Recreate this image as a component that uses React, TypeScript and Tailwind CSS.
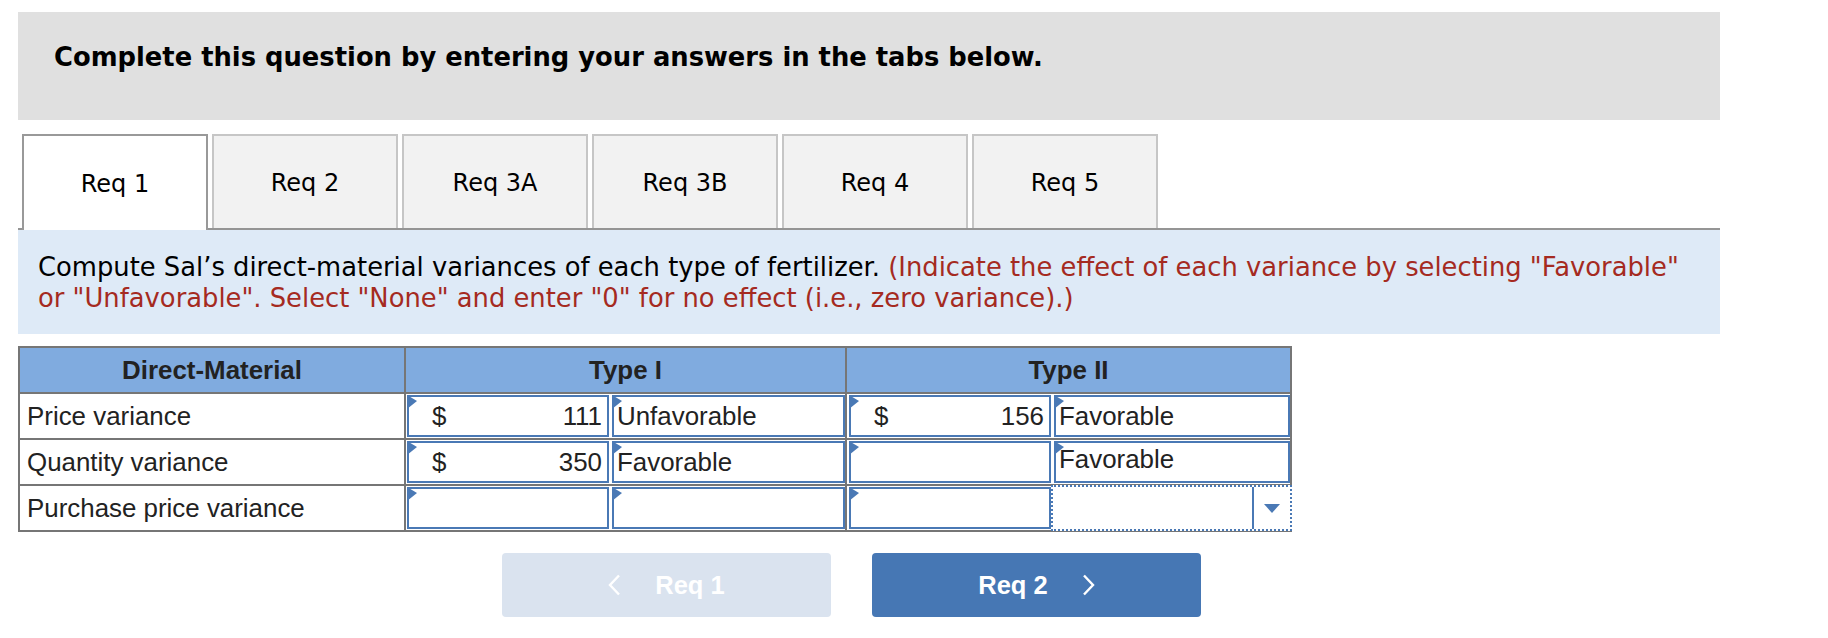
import React from "react";

const VERDANA = "font-['DejaVu_Sans',Verdana,sans-serif]";
const ARIAL = "font-['Liberation_Sans',Arial,sans-serif]";

function Flag() {
  return (
    <svg
      className="absolute left-[-2px] top-[-2px]"
      width="10"
      height="14"
      viewBox="0 0 10 14"
    >
      <polygon points="0,0 10,6 0,14" fill="#4a79b5" />
    </svg>
  );
}

function Amount({ value, dollar }: { value?: string; dollar?: boolean }) {
  return (
    <div className="relative w-[202px] h-[42px] border-2 border-[#4a79b5] bg-white flex items-center pl-[23px] pr-[5px]">
      <Flag />
      <span className="flex-1">{dollar ? "$" : ""}</span>
      <span>{value ?? ""}</span>
    </div>
  );
}

function Select({ value, grow, raised }: { value?: string; grow?: boolean; raised?: boolean }) {
  return (
    <div
      className={
        "relative h-[42px] border-2 border-[#4a79b5] bg-white flex items-center pl-[3px] " +
        (grow ? "flex-1" : "w-[233px]") +
        (raised ? " pb-[5px]" : "")
      }
    >
      <Flag />
      <span>{value ?? ""}</span>
    </div>
  );
}

function Tab({ label, active }: { label: string; active?: boolean }) {
  if (active) {
    return (
      <div className="relative z-10 w-[186px] h-[96px] border-2 border-b-0 border-[#999999] bg-white flex items-center justify-center pt-[2px]">
        {label}
      </div>
    );
  }
  return (
    <div className="w-[186px] h-[94px] border-2 border-b-0 border-[#c6c6c6] bg-[#f2f2f2] flex items-center justify-center pt-[2px]">
      {label}
    </div>
  );
}

function Chevron({ dir }: { dir: "left" | "right" }) {
  return (
    <svg width="13" height="22" viewBox="0 0 13 22" fill="none">
      {dir === "left" ? (
        <polyline points="11,1.5 2,11 11,20.5" stroke="white" strokeWidth="2.4" />
      ) : (
        <polyline points="2,1.5 11,11 2,20.5" stroke="white" strokeWidth="2.4" />
      )}
    </svg>
  );
}

export default function App() {
  const line = "border-[#767676]";
  return (
    <div className="w-[1828px] h-[638px] bg-white overflow-hidden text-[#000]">
      <div className="ml-[18px] w-[1702px] pt-[12px]">
        {/* heading */}
        <div className={"h-[108px] bg-[#e0e0e0] pl-[36px] pt-[30px] " + VERDANA}>
          <div className="text-[25.8px] leading-[30px] font-bold text-black">
            Complete this question by entering your answers in the tabs below.
          </div>
        </div>

        {/* tabs */}
        <div
          className={
            "mt-[14px] h-[96px] border-b-2 border-[#959595] flex items-start gap-[4px] pl-[4px] text-[24px] text-black " +
            VERDANA
          }
        >
          <Tab label="Req 1" active />
          <Tab label="Req 2" />
          <Tab label="Req 3A" />
          <Tab label="Req 3B" />
          <Tab label="Req 4" />
          <Tab label="Req 5" />
        </div>

        {/* instructions */}
        <div
          className={
            "h-[104px] bg-[#deeaf7] pl-[20px] pr-[30px] pt-[22px] text-[25.8px] leading-[31px] " +
            VERDANA
          }
        >
          <span className="text-black">
            Compute Sal’s direct-material variances of each type of fertilizer.{" "}
          </span>
          <span className="text-[#a52a21]">
            (Indicate the effect of each variance by selecting "Favorable" or "Unfavorable". Select
            "None" and enter "0" for no effect (i.e., zero variance).)
          </span>
        </div>

        {/* table */}
        <div className={"mt-[12px] w-[1274px] border-2 text-[25.9px] text-[#222] " + line + " " + ARIAL}>
          <div className={"flex h-[46px] border-b-2 bg-[#80abdf] font-bold " + line}>
            <div className={"w-[386px] border-r-2 flex items-center justify-center " + line}>
              Direct-Material
            </div>
            <div className={"w-[441px] border-r-2 flex items-center justify-center " + line}>
              Type I
            </div>
            <div className="flex-1 flex items-center justify-center">Type II</div>
          </div>

          {/* row 1 */}
          <div className={"flex h-[46px] border-b-2 " + line}>
            <div className={"w-[386px] border-r-2 flex items-center pl-[7px] " + line}>
              Price variance
            </div>
            <div className={"w-[441px] border-r-2 flex items-center gap-[3px] pl-[1px] " + line}>
              <Amount dollar value="111" />
              <Select value="Unfavorable" />
            </div>
            <div className="flex-1 flex items-center gap-[3px] pl-[2px]">
              <Amount dollar value="156" />
              <Select value="Favorable" grow />
            </div>
          </div>

          {/* row 2 */}
          <div className={"flex h-[46px] border-b-2 " + line}>
            <div className={"w-[386px] border-r-2 flex items-center pl-[7px] " + line}>
              Quantity variance
            </div>
            <div className={"w-[441px] border-r-2 flex items-center gap-[3px] pl-[1px] " + line}>
              <Amount dollar value="350" />
              <Select value="Favorable" />
            </div>
            <div className="flex-1 flex items-center gap-[3px] pl-[2px]">
              <Amount />
              <Select value="Favorable" grow raised />
            </div>
          </div>

          {/* row 3 */}
          <div className="flex h-[44px]">
            <div className={"w-[386px] border-r-2 flex items-center pl-[7px] " + line}>
              Purchase price variance
            </div>
            <div className={"w-[441px] border-r-2 flex items-center gap-[3px] pl-[1px] " + line}>
              <Amount />
              <Select />
            </div>
            <div className="flex-1 flex items-center gap-[0px] pl-[2px]">
              <Amount />
              <div className="relative flex-1 h-[46px] mr-[-2px] border-2 border-dotted border-[#4a79b5] bg-white flex">
                <div className="flex-1" />
                <div className="w-[38px] border-l-2 border-[#4a79b5] flex items-center justify-center">
                  <svg width="16" height="9" viewBox="0 0 16 9">
                    <polygon points="0,0 16,0 8,9" fill="#4a79b5" />
                  </svg>
                </div>
              </div>
            </div>
          </div>
        </div>

        {/* nav buttons */}
        <div className={"mt-[21px] ml-[484px] flex gap-[41px] text-[25.5px] font-bold text-white " + ARIAL}>
          <div className="w-[329px] h-[64px] rounded-[4px] bg-[#dae3ef] flex items-center justify-center gap-[34px]">
            <Chevron dir="left" />
            <span>Req 1</span>
          </div>
          <div className="w-[329px] h-[64px] rounded-[4px] bg-[#4677b4] flex items-center justify-center gap-[34px]">
            <span>Req 2</span>
            <Chevron dir="right" />
          </div>
        </div>
      </div>
    </div>
  );
}
